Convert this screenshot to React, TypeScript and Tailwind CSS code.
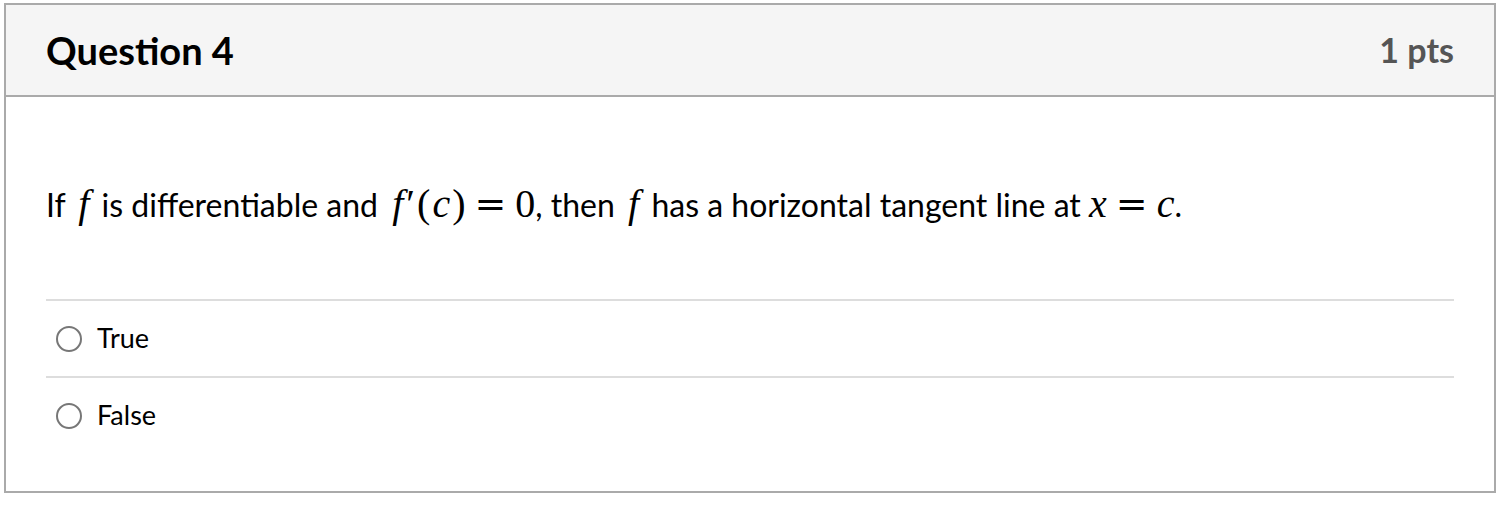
import React from 'react'

const lato = { fontFamily: 'Lato, "Noto Sans", sans-serif' }

function Mi({ children, className = '' }: { children: React.ReactNode; className?: string }) {
  return <span className={`font-['Liberation_Serif',serif] italic text-[40px] ${className}`}>{children}</span>
}

function Mr({ children, className = '' }: { children: React.ReactNode; className?: string }) {
  return <span className={`font-['Liberation_Serif',serif] text-[40px] ${className}`}>{children}</span>
}

function Eq() {
  return <span className="font-['DejaVu_Serif',serif] text-[38px] mx-[9px]">=</span>
}

function Answer({ label }: { label: string }) {
  return (
    <div className="flex items-center h-[77px] border-t-2 border-[#dddddd]">
      <span className="ml-[10px] w-[26px] h-[26px] rounded-full border-2 border-[#777777] bg-white shrink-0" />
      <span className="ml-[15px] mb-[3px] text-[27px] leading-none text-black">{label}</span>
    </div>
  )
}

export default function App() {
  return (
    <div className="w-[1506px] h-[516px] bg-white pt-[3px] pl-[4px]" style={lato}>
      <div className="w-[1492px] h-[490px] border-2 border-[#aaaaaa] flex flex-col">
        <div className="h-[92px] bg-[#f5f5f5] border-b-2 border-[#aaaaaa] flex items-center justify-between px-[40px] shrink-0">
          <h2 className="text-[38px] font-bold text-black leading-none">Question 4</h2>
          <span className="text-[34px] font-bold text-[#555555] leading-none">1 pts</span>
        </div>
        <div className="px-[40px] flex-1">
          <p className="h-[202px] pt-[88px] text-[32px] leading-[38px] text-black whitespace-nowrap">
            If <Mi className="ml-[5px] mr-[4px]">f</Mi> is differentiable and <Mi className="ml-[6px]">f</Mi>
            <Mr className="ml-[3px]">′</Mr>
            <Mr className="ml-[2px]">(</Mr>
            <Mi className="mx-[2px]">c</Mi>
            <Mr>)</Mr>
            <Eq />
            <Mr>0</Mr>, then <Mi className="ml-[5px] mr-[4px]">f</Mi> has a horizontal tangent line at <Mi>x</Mi>
            <Eq />
            <Mi>c</Mi>.
          </p>
          <Answer label="True" />
          <Answer label="False" />
        </div>
      </div>
    </div>
  )
}
